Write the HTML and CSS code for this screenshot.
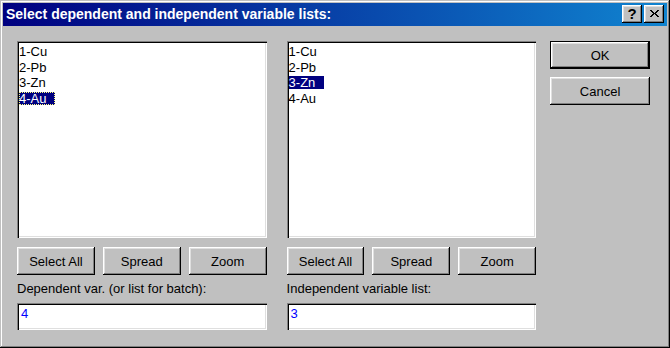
FILE: index.html
```html
<!DOCTYPE html>
<html>
<head>
<meta charset="utf-8">
<link rel="stylesheet" href="styles.css">
</head>
<body>
<div class="window">
  <div class="titlebar">
    <span class="title">Select dependent and independent variable lists:</span>
    <div class="tbtns">
      <div class="tbtn help">?</div>
      <div class="tbtn close">
        <svg width="9" height="8" viewBox="0 0 9 8"><path d="M0 0h2v1h1v1h1v1h1v-1h1v-1h1v-1h2v1h-1v1h-1v1h-1v1h1v1h1v1h1v1h-2v-1h-1v-1h-1v-1h-1v1h-1v1h-1v1h-2v-1h1v-1h1v-1h1v-1h-1v-1h-1v-1h-1z" fill="#000"/></svg>
      </div>
    </div>
  </div>
  <div class="content">
    <div class="col">
      <div class="listbox">
        <div class="item"><span class="txt">1-Cu</span></div>
        <div class="item"><span class="txt">2-Pb</span></div>
        <div class="item"><span class="txt">3-Zn</span></div>
        <div class="item"><span class="txt sel focus">4-Au</span></div>
      </div>
      <div class="btnrow">
        <div class="btn">Select All</div>
        <div class="btn">Spread</div>
        <div class="btn">Zoom</div>
      </div>
      <div class="label">Dependent var. (or list for batch):</div>
      <div class="field">4</div>
    </div>
    <div class="col">
      <div class="listbox">
        <div class="item"><span class="txt">1-Cu</span></div>
        <div class="item"><span class="txt">2-Pb</span></div>
        <div class="item"><span class="txt sel">3-Zn</span></div>
        <div class="item"><span class="txt">4-Au</span></div>
      </div>
      <div class="btnrow">
        <div class="btn">Select All</div>
        <div class="btn">Spread</div>
        <div class="btn">Zoom</div>
      </div>
      <div class="label">Independent variable list:</div>
      <div class="field">3</div>
    </div>
    <div class="side">
      <div class="default"><div class="btn">OK</div></div>
      <div class="btn cancel">Cancel</div>
    </div>
  </div>
</div>
</body>
</html>
```

FILE: styles.css
```css
html, body {
  margin: 0;
  padding: 0;
  background: #c0c0c0;
}
body {
  font-family: "Liberation Sans", Arial, sans-serif;
  font-size: 13px;
  color: #000;
}
.window {
  width: 670px;
  height: 348px;
  box-sizing: border-box;
  padding: 3px;
  background: #c0c0c0;
  box-shadow: inset -1px -1px #000, inset 1px 1px #c0c0c0, inset -2px -2px #808080, inset 2px 2px #fff;
}
.titlebar {
  height: 23px;
  background: linear-gradient(to right, #000080, #1084d0);
  display: flex;
  align-items: center;
  justify-content: space-between;
  padding-left: 3px;
  padding-right: 3px;
}
.title {
  color: #fff;
  font-weight: bold;
  font-size: 14px;
  line-height: 23px;
  white-space: nowrap;
}
.tbtns {
  display: flex;
  gap: 2px;
  align-self: flex-start;
  margin-top: 2px;
}
.tbtn {
  width: 20px;
  height: 18px;
  box-sizing: border-box;
  background: #c0c0c0;
  box-shadow: inset -1px -1px #000, inset 1px 1px #fff, inset -2px -2px #808080, inset 2px 2px #dfdfdf;
  display: flex;
  align-items: center;
  justify-content: center;
}
.help {
  font-weight: bold;
  font-size: 15px;
  line-height: 18px;
  padding-bottom: 1px;
}
.close svg {
  display: block;
  margin-bottom: 1px;
}
.content {
  display: flex;
  padding: 15px 17px 0 14px;
  gap: 20px;
}
.col {
  width: 250px;
  display: flex;
  flex-direction: column;
}
.listbox {
  height: 197px;
  box-sizing: border-box;
  background: #fff;
  padding: 4px 2px 2px 2px;
  box-shadow: inset 1px 1px #808080, inset 2px 2px #000, inset -1px -1px #fff, inset -2px -2px #dfdfdf;
}
.item {
  height: 15.6px;
  line-height: 13px;
}
.txt {
  display: inline-block;
  height: 13px;
  line-height: 13px;
  padding-right: 9px;
}
.sel {
  background: #000080;
  color: #fff;
}
.focus {
  outline: 1px dotted #ffff80;
  outline-offset: -1px;
}
.btnrow {
  display: flex;
  gap: 8px;
  margin-top: 9px;
}
.btnrow .btn {
  flex: 1;
}
.btn {
  height: 28px;
  box-sizing: border-box;
  background: #c0c0c0;
  box-shadow: inset -1px -1px #000, inset 1px 1px #fff, inset -2px -2px #808080, inset 2px 2px #dfdfdf;
  display: flex;
  align-items: center;
  justify-content: center;
  line-height: 15px;
}
.label {
  margin-top: 6px;
  line-height: 15px;
  white-space: nowrap;
}
.field {
  margin-top: 7px;
  height: 27px;
  box-sizing: border-box;
  background: #fff;
  color: #0000ff;
  padding: 3px 4px;
  line-height: 15px;
  box-shadow: inset 1px 1px #808080, inset 2px 2px #000, inset -1px -1px #fff, inset -2px -2px #dfdfdf;
}
.side {
  width: 100px;
  margin-left: -6px;
  display: flex;
  flex-direction: column;
  gap: 8px;
}
.default {
  box-shadow: inset 0 0 0 1px #000;
  padding: 1px;
  height: 28px;
  box-sizing: border-box;
}
.default .btn {
  height: 26px;
}
.cancel {
  margin-top: 0;
}
```
